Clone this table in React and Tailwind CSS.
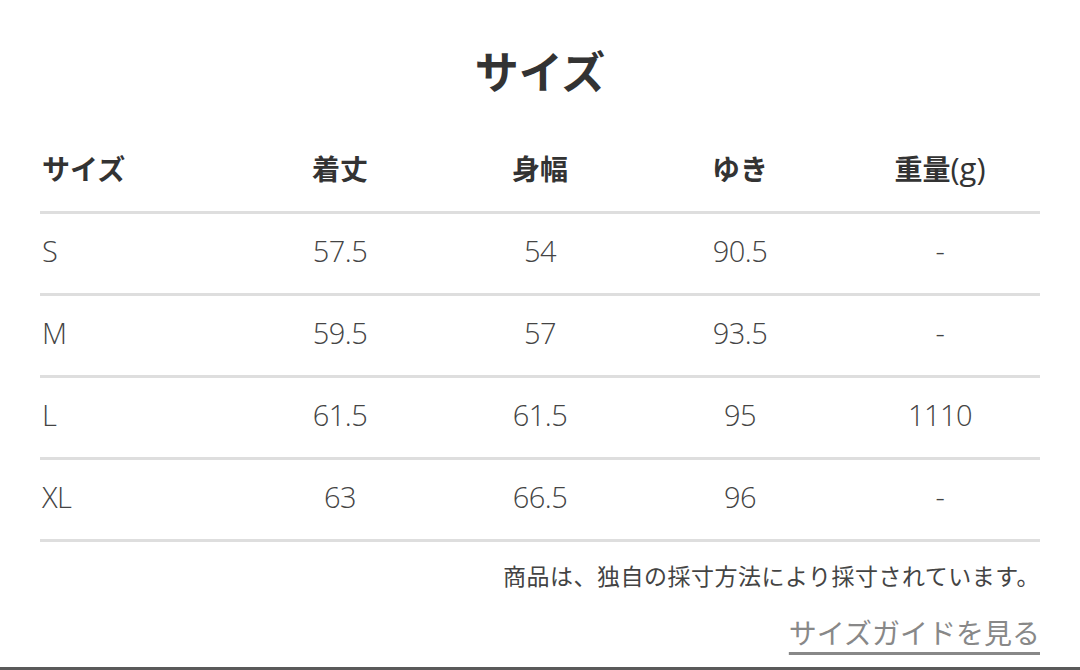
import React from "react";

const rows = [
  { size: "S", length: "57.5", width: "54", sleeve: "90.5", weight: "-" },
  { size: "M", length: "59.5", width: "57", sleeve: "93.5", weight: "-" },
  { size: "L", length: "61.5", width: "61.5", sleeve: "95", weight: "1110" },
  { size: "XL", length: "63", width: "66.5", sleeve: "96", weight: "-" },
];

const jp = "font-['Noto_Sans_CJK_JP',sans-serif]";

const App = () => {
  return (
    <div className="w-[1080px] h-[670px] bg-white border-b-[3px] border-[#5a5a5a] overflow-hidden flex flex-col">
      <h1 className={`${jp} text-[44px] leading-none font-bold text-[#333] text-center mt-[48px]`}>
        サイズ
      </h1>

      <div className="mx-10 mt-[33px]">
        <div className={`${jp} grid grid-cols-5 h-[89px] items-center border-b-[3px] border-[#dedede] text-[28px] font-bold text-[#333]`}>
          <div className="pl-0.5">サイズ</div>
          <div className="text-center">着丈</div>
          <div className="text-center">身幅</div>
          <div className="text-center">ゆき</div>
          <div className="text-center">
            重量<span className="font-['Open_Sans',sans-serif] font-normal text-[31px]">(g)</span>
          </div>
        </div>

        {rows.map((row) => (
          <div
            key={row.size}
            className="grid grid-cols-5 h-[82px] items-center pb-1.5 border-b-[3px] border-[#dedede] font-['Open_Sans',sans-serif] font-light text-[29px] tracking-[-0.5px] text-[#444]"
          >
            <div className="pl-0.5">{row.size}</div>
            <div className="text-center">{row.length}</div>
            <div className="text-center">{row.width}</div>
            <div className="text-center">{row.sleeve}</div>
            <div className="text-center">{row.weight}</div>
          </div>
        ))}

        <p className={`${jp} text-right text-[23px] text-[#444] mt-[22px] leading-none tracking-[0.5px]`}>
          商品は、独自の採寸方法により採寸されています。
        </p>

        <div className="flex justify-end mt-[31px]">
          <a
            href="#"
            className={`${jp} text-[28px] leading-none text-[#888] underline decoration-[3px] underline-offset-[8px] decoration-[#888]`}
          >
            サイズガイドを見る
          </a>
        </div>
      </div>
    </div>
  );
};

export default App;
